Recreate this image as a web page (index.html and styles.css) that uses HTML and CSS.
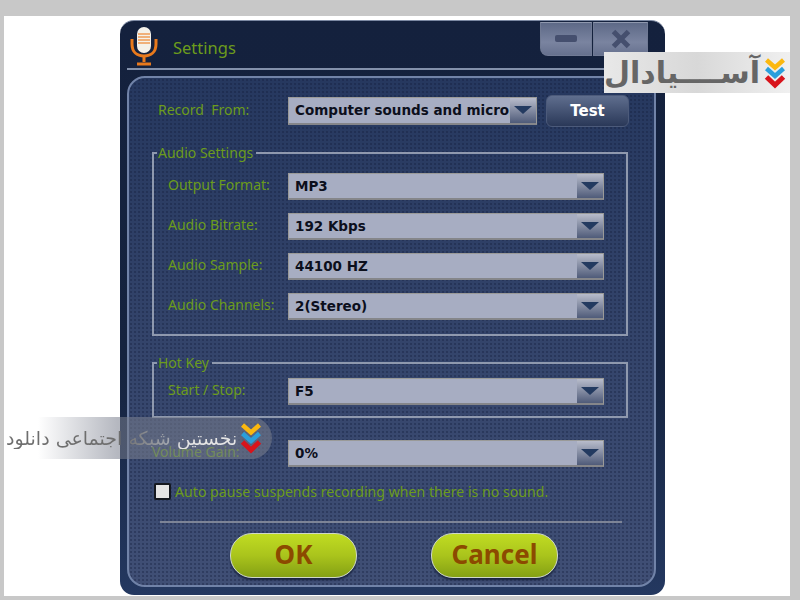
FILE: index.html
```html
<!DOCTYPE html>
<html lang="en">
<head>
  <meta charset="UTF-8">
  <meta name="viewport" content="width=device-width, initial-scale=1.0">
  <title>Settings</title>
  <link rel="stylesheet" href="styles.css">
</head>
<body>
  <svg class="defs" width="0" height="0">
    <symbol id="chevrons" viewBox="0 0 22 32">
      <path d="M2.5 3 11 10.5 19.5 3" fill="none" stroke="#fbb80f" stroke-width="4.5"/>
      <path d="M2.5 11.5 11 19 19.5 11.5" fill="none" stroke="#2a9fdc" stroke-width="4.5"/>
      <path d="M2.5 20 11 28 19.5 20" fill="none" stroke="#d8141c" stroke-width="5"/>
    </symbol>
  </svg>

  <div class="window">
    <div class="titlebar">
      <svg class="mic" width="28" height="40" viewBox="0 0 28 40">
        <rect x="7" y="1" width="14" height="26" rx="7" fill="#f4f1ea"/>
        <path d="M8 8h12M8 11h12M8 14h12M8 17h12" stroke="#ee9a55" stroke-width="1.5"/>
        <path d="M2 13v5c0 8 5 12 12 12s12-4 12-12v-5" fill="none" stroke="#e8791c" stroke-width="3"/>
        <path d="M14 30v6M7 38h14" stroke="#e8791c" stroke-width="3"/>
      </svg>
      <span class="title">Settings</span>
      <div class="winbtns">
        <div class="winbtn winbtn-min"><svg width="22" height="8" viewBox="0 0 22 8"><rect width="22" height="7" rx="2" fill="#454f6e"/></svg></div>
        <div class="winbtn winbtn-close"><svg width="20" height="20" viewBox="0 0 20 20"><path d="M2.5 2.5 17.5 17.5M17.5 2.5 2.5 17.5" stroke="#454f6e" stroke-width="5"/></svg></div>
      </div>
    </div>

    <div class="panel">
      <div class="row row-record">
        <label class="lbl lbl-record">Record&nbsp; From:</label>
        <div class="select select-record"><span class="val">Computer sounds and microphone</span><span class="arrow"></span></div>
        <button class="test-btn">Test</button>
      </div>

      <fieldset class="group group-audio">
        <legend>Audio Settings</legend>
        <div class="row"><label class="lbl">Output Format:</label><div class="select"><span class="val">MP3</span><span class="arrow"></span></div></div>
        <div class="row"><label class="lbl">Audio Bitrate:</label><div class="select"><span class="val">192 Kbps</span><span class="arrow"></span></div></div>
        <div class="row"><label class="lbl">Audio Sample:</label><div class="select"><span class="val">44100 HZ</span><span class="arrow"></span></div></div>
        <div class="row"><label class="lbl">Audio Channels:</label><div class="select"><span class="val">2(Stereo)</span><span class="arrow"></span></div></div>
      </fieldset>

      <fieldset class="group group-hotkey">
        <legend>Hot Key</legend>
        <div class="row"><label class="lbl">Start / Stop:</label><div class="select"><span class="val">F5</span><span class="arrow"></span></div></div>
      </fieldset>

      <div class="row row-volume">
        <label class="lbl lbl-volume">Volume Gain:</label>
        <div class="select"><span class="val">0%</span><span class="arrow"></span></div>
      </div>

      <div class="row-check">
        <span class="checkbox"></span>
        <span class="check-text">Auto pause suspends recording when there is no sound.</span>
      </div>

      <div class="sep"></div>

      <div class="actions">
        <button class="pill">OK</button>
        <button class="pill">Cancel</button>
      </div>
    </div>
  </div>

  <div class="brand">
    <span class="brand-name" dir="rtl" lang="fa">آســــیادال</span>
    <svg class="brand-mark" width="22" height="32"><use href="#chevrons"/></svg>
  </div>

  <div class="watermark">
    <span class="watermark-text" dir="rtl" lang="fa">نخستین شبکه اجتماعی دانلود</span>
    <svg class="watermark-mark" width="22" height="32"><use href="#chevrons"/></svg>
  </div>
</body>
</html>
```

FILE: styles.css
```css
body {
  margin: 0;
  box-sizing: border-box;
  height: 600px;
  overflow: hidden;
  background: #fff;
  border-style: solid;
  border-color: #c8c8c8;
  border-width: 16px 10px 4px 4px;
  font-family: "Noto Sans", sans-serif;
}
.defs {
  position: absolute;
}

/* window */
.window {
  width: 545px;
  height: 575px;
  margin: 4px 0 0 116px;
  box-sizing: border-box;
  padding: 1px 9px 0 7px;
  border-radius: 14px;
  border-top: 1px solid #7c89a3;
  background: linear-gradient(#14213d, #15233f 60%, #243860);
}
.titlebar {
  display: flex;
  align-items: flex-start;
  height: 46px;
  border-bottom: 2px solid #8391ab;
  margin-bottom: 6px;
}
.mic {
  margin: 4px 0 0 3px;
}
.title {
  margin: 14px 0 0 15px;
  font-size: 16.5px;
  color: #6c9c1c;
}
.winbtns {
  display: flex;
  gap: 1px;
  margin-left: auto;
  margin-right: 8px;
}
.winbtn {
  display: flex;
  align-items: center;
  justify-content: center;
  height: 34px;
  box-sizing: border-box;
  border: 1px solid #707a94;
  border-top-color: #8f98ae;
  background: linear-gradient(#5d6987, #7a84a0 60%, #66718e);
}
.winbtn-min {
  width: 52px;
  border-radius: 0 0 0 8px;
}
.winbtn-close {
  width: 55px;
}

/* main panel */
.panel {
  height: 511px;
  box-sizing: border-box;
  border: 2px solid #7183a8;
  border-radius: 18px;
  padding-top: 17px;
  background-color: #2c3e66;
  background-image:
    radial-gradient(circle, rgba(18, 28, 58, 0.35) 0.9px, transparent 1.1px),
    linear-gradient(#26385f, #404f75);
  background-size: 4px 4px, 100% 100%;
}
.row {
  display: flex;
  align-items: center;
  height: 27px;
  margin-bottom: 13px;
}
.row:last-child {
  margin-bottom: 0;
}
.row-record {
  height: 32px;
  margin: 0 0 18px 29px;
}
.lbl {
  width: 120px;
  margin-top: -4px;
  font-size: 14px;
  color: #6c9c1c;
}
.lbl-record {
  width: 130px;
}
.lbl-volume {
  width: 136px;
}
.select {
  display: flex;
  width: 316px;
  height: 27px;
  box-sizing: border-box;
  border: 1px solid #9a9a98;
  border-bottom: 2px solid #85868a;
  background: #a7adc2;
}
.select-record {
  width: 249px;
  height: 28px;
}
.val {
  flex: 1;
  overflow: hidden;
  white-space: nowrap;
  padding-left: 6px;
  font: bold 13.5px/24px "DejaVu Sans", sans-serif;
  color: #0c0f1c;
}
.arrow {
  position: relative;
  width: 26px;
  background: linear-gradient(#b8bccb, #4f5b79);
}
.arrow::after {
  content: "";
  position: absolute;
  left: 4px;
  top: 8px;
  border-style: solid;
  border-width: 8px 9px 0;
  border-color: #233a60 transparent transparent;
}
.test-btn {
  width: 83px;
  height: 32px;
  margin-left: 9px;
  border: 1px solid #4c5a7a;
  border-radius: 6px;
  background: linear-gradient(#5f6e8e, #2a3858);
  color: #fff;
  font: bold 15px "DejaVu Sans", sans-serif;
}

/* group boxes */
.group {
  width: 476px;
  margin: 0 0 19px 23px;
  padding: 12px 0 14px 14px;
  box-sizing: border-box;
  border: 2px solid #8f99ae;
}
.group legend {
  padding: 0 3px 0 1px;
  margin-left: -11px;
  font-size: 14px;
  line-height: 16px;
  color: #6c9c1c;
}
.group-hotkey {
  padding: 7px 0 11px 14px;
}
.row-volume {
  margin: 22px 0 0 23px;
}

.row-check {
  display: flex;
  align-items: center;
  gap: 4px;
  margin: 16px 0 0 25px;
}
.checkbox {
  width: 17px;
  height: 17px;
  box-sizing: border-box;
  border: 2px solid #15181f;
  border-radius: 2px;
  background: #e4e4e4;
}
.check-text {
  font-size: 14.15px;
  line-height: 17px;
  color: #6c9c1c;
}
.sep {
  width: 462px;
  height: 2px;
  margin: 21px 0 0 31px;
  background: #7d8496;
}
.actions {
  display: flex;
  gap: 74px;
  margin: 10px 0 0 101px;
}
.pill {
  width: 127px;
  height: 45px;
  padding: 0 0 3px;
  border: 1px solid #cfd8c8;
  border-radius: 22px;
  background: linear-gradient(#c0dc22, #aac41c 50%, #84a014);
  box-shadow: 0 2px 2px #1a2440;
  color: #8c4a00;
  font: bold 26px "Noto Sans", sans-serif;
}

/* site badges laid over the screenshot */
.brand {
  position: absolute;
  left: 604px;
  top: 52px;
  width: 186px;
  height: 41px;
  display: flex;
  align-items: center;
  justify-content: flex-end;
  gap: 4px;
  padding-right: 4px;
  box-sizing: border-box;
  background: linear-gradient(90deg, #e8e8e8, #d8d8d8 50%, #f0f0f0);
}
.brand-name {
  font: bold 30px/41px "DejaVu Sans", sans-serif;
  white-space: nowrap;
  color: #666;
}
.brand-mark,
.watermark-mark {
  flex-shrink: 0;
}
.watermark {
  position: absolute;
  left: 6px;
  top: 417px;
  width: 266px;
  height: 42px;
  display: flex;
  align-items: center;
  gap: 3px;
  border-radius: 0 21px 21px 0;
  background: linear-gradient(90deg, rgba(120, 125, 140, 0) 12%, rgba(120, 125, 140, 0.55) 42%);
}
.watermark-text {
  font: 19px "DejaVu Sans", sans-serif;
  white-space: nowrap;
  color: transparent;
  background: linear-gradient(90deg, #6e6e6e 50%, #a0a4ac 70%, #e4e4e4 76%);
  -webkit-background-clip: text;
  background-clip: text;
}
```
